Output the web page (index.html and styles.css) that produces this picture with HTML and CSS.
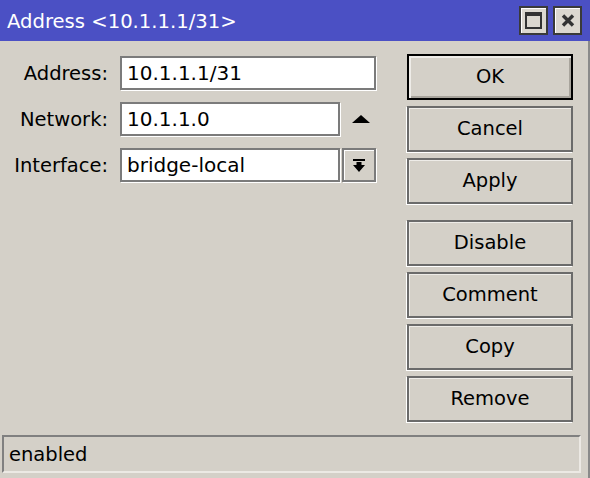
FILE: index.html
```html
<!DOCTYPE html>
<html>
<head>
<meta charset="utf-8">
<link rel="stylesheet" href="styles.css">
</head>
<body>
<div class="window">
  <div class="titlebar">
    <span class="title">Address &lt;10.1.1.1/31&gt;</span>
    <div class="tbuttons">
      <div class="tbtn"><span class="maxicon"></span></div>
      <div class="tbtn">
        <svg width="14" height="13" viewBox="0 0 14 13"><path d="M2 1.5 L12 11.5 M12 1.5 L2 11.5" stroke="#333" stroke-width="3.4" fill="none"/></svg>
      </div>
    </div>
  </div>
  <div class="main">
    <div class="form">
      <label class="lbl">Address:</label>
      <div class="field span2">10.1.1.1/31</div>
      <label class="lbl">Network:</label>
      <div class="field">10.1.1.0</div>
      <div class="uparrow">
        <svg width="18" height="8" viewBox="0 0 18 8"><path d="M9 0 L18 8 L0 8 Z" fill="#000"/></svg>
      </div>
      <label class="lbl">Interface:</label>
      <div class="field">bridge-local</div>
      <div class="dropbtn">
        <svg width="12" height="13" viewBox="0 0 12 13"><rect x="0" y="0" width="12" height="2" fill="#000"/><path d="M3.5 3 H8.5 V6 H12 L6 13 L0 6 H3.5 Z" fill="#000"/></svg>
      </div>
    </div>
    <div class="buttons">
      <div class="btn default">OK</div>
      <div class="btn">Cancel</div>
      <div class="btn">Apply</div>
      <div class="btn group">Disable</div>
      <div class="btn">Comment</div>
      <div class="btn">Copy</div>
      <div class="btn">Remove</div>
    </div>
  </div>
  <div class="status">enabled</div>
</div>
</body>
</html>
```
FILE: styles.css
```css
html, body {
  margin: 0;
  padding: 0;
  background: #d4d0c8;
}
body {
  font-family: "DejaVu Sans", sans-serif;
  font-size: 19.5px;
  color: #000;
  width: 590px;
  height: 478px;
  overflow: hidden;
}
.window {
  width: 588px;
  height: 478px;
  border-right: 2px solid #8a8a8a;
  display: flex;
  flex-direction: column;
}
.titlebar {
  height: 41px;
  flex: none;
  background: #4b50c4;
  display: flex;
  align-items: center;
  justify-content: space-between;
  padding-left: 7px;
  margin-right: -2px;
}
.title {
  color: #fff;
  font-size: 19.6px;
  margin-top: 1px;
}
.tbuttons {
  display: flex;
  gap: 5px;
  margin-right: 8px;
  align-self: flex-start;
  margin-top: 6px;
}
.tbtn {
  width: 29px;
  height: 29px;
  box-sizing: border-box;
  background: #dcd8d0;
  border: 2px solid #3a3a3a;
  box-shadow: inset 1px 1px 0 #fff;
  display: flex;
  align-items: center;
  justify-content: center;
}
.maxicon {
  width: 17px;
  height: 17px;
  box-sizing: border-box;
  border: 2px solid #333;
  border-top-width: 4px;
}
.main {
  display: flex;
  padding-top: 13px;
}
.form {
  width: 407px;
  margin-top: 2px;
  display: grid;
  grid-template-columns: 118px 220px 34px;
  grid-auto-rows: 34px;
  column-gap: 2px;
  row-gap: 12px;
  align-content: start;
}
.lbl {
  text-align: right;
  padding-right: 10px;
  display: flex;
  align-items: center;
  justify-content: flex-end;
}
.field {
  background: #fff;
  border: 2px solid #7b7b7b;
  box-shadow: 1px 1px 0 #fff;
  padding-left: 5px;
  display: flex;
  align-items: center;
  font-size: 20px;
}
.span2 {
  grid-column: 2 / 4;
}
.uparrow {
  display: flex;
  align-items: center;
  justify-content: center;
  padding-left: 4px;
  padding-bottom: 1px;
}
.dropbtn {
  border: 2px solid #7b7b7b;
  box-shadow: 1px 1px 0 #fff, inset 1px 1px 0 #fff;
  display: flex;
  align-items: center;
  justify-content: center;
}
.buttons {
  width: 166px;
  display: flex;
  flex-direction: column;
  gap: 6px;
}
.btn {
  height: 46px;
  box-sizing: border-box;
  border: 2px solid #6b6b6b;
  box-shadow: -1px 1px 0 #fff, inset 1px 1px 0 #eeece8;
  display: flex;
  align-items: center;
  justify-content: center;
  padding-bottom: 1px;
}
.btn.default {
  border-color: #000;
  box-shadow: inset 2px 2px 0 #eeece8, inset -2px -2px 0 #a8a49c;
}
.btn.group {
  margin-top: 10px;
}
.status {
  margin-top: auto;
  margin-bottom: 5px;
  margin-left: 2px;
  width: 579px;
  height: 38px;
  flex: none;
  box-sizing: border-box;
  border-top: 2px solid #808080;
  border-left: 2px solid #808080;
  border-bottom: 2px solid #ece9e4;
  border-right: 2px solid #ece9e4;
  padding-left: 5px;
  display: flex;
  align-items: center;
}
```
